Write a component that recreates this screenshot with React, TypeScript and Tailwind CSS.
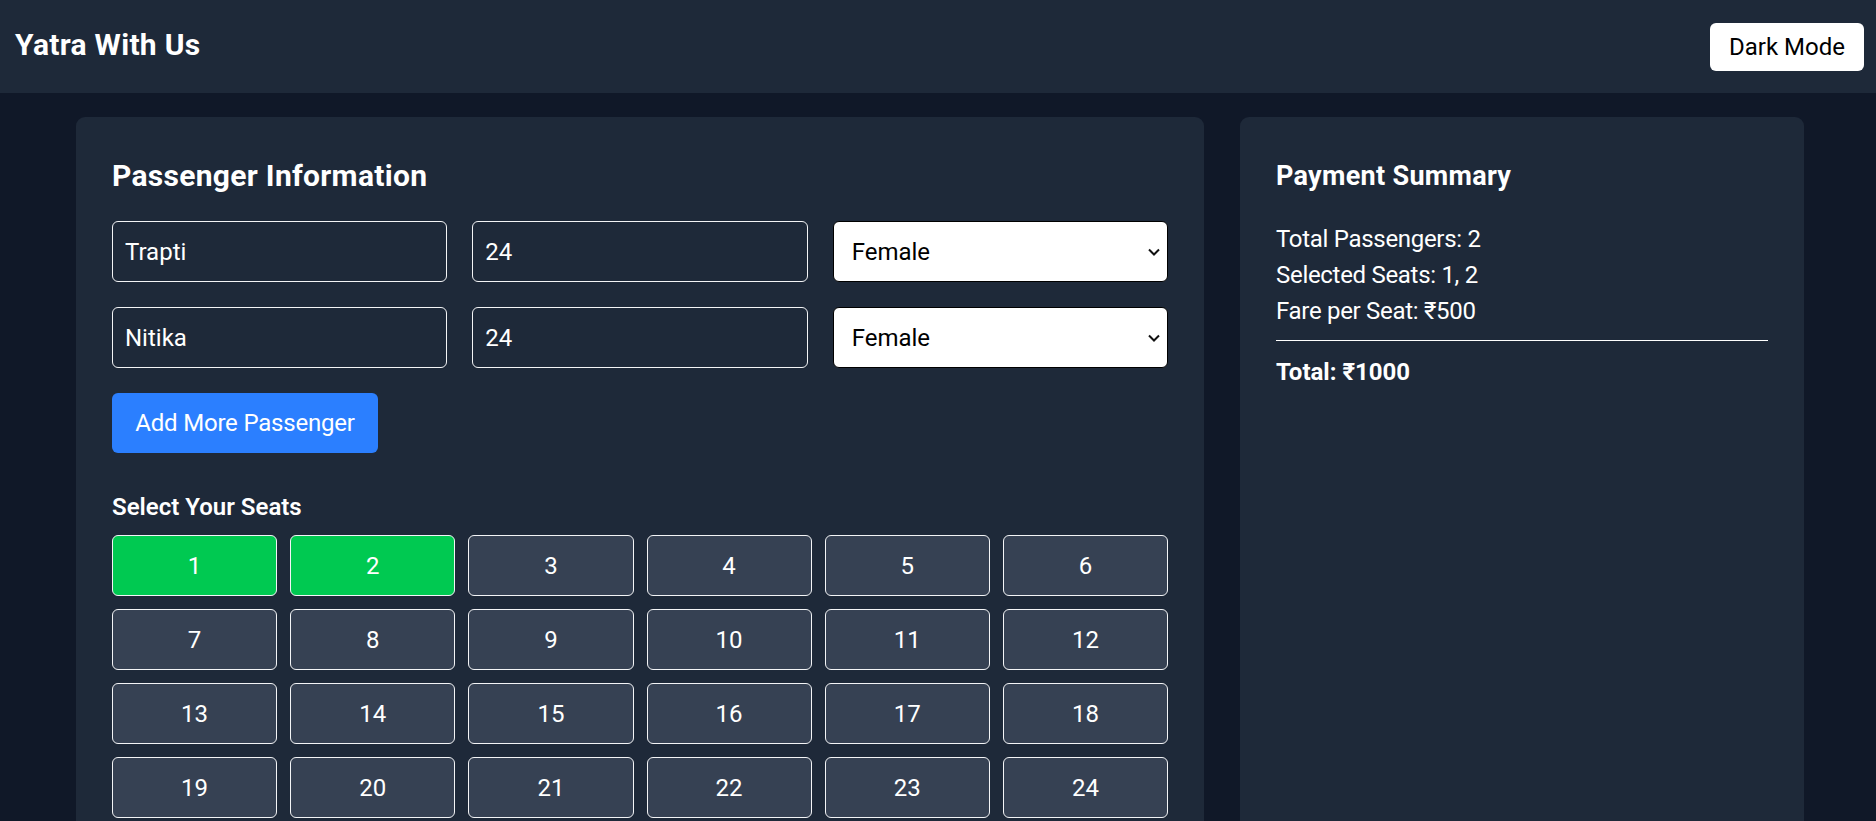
import { useState } from 'react'

const FONT = { fontFamily: 'Roboto, "Noto Sans", sans-serif' }

type Passenger = { name: string; age: string; gender: string }

const initialPassengers: Passenger[] = [
  { name: 'Trapti', age: '24', gender: 'Female' },
  { name: 'Nitika', age: '24', gender: 'Female' },
]

const seats = Array.from({ length: 40 }, (_, i) => i + 1)
const FARE = 500

export default function App() {
  const [passengers, setPassengers] = useState(initialPassengers)
  const [selected, setSelected] = useState<number[]>([1, 2])

  const toggleSeat = (n: number) =>
    setSelected((s) => (s.includes(n) ? s.filter((x) => x !== n) : [...s, n]))

  return (
    <div className="min-h-screen bg-gray-900 text-white" style={FONT}>
      <header className="h-[93px] bg-gray-800 flex items-center justify-between pl-[15px] pr-[12px]">
        <h1 className="text-[30px] font-bold leading-[42px] tracking-[0.3px] -mt-[4px]">Yatra With Us</h1>
        <button className="h-[48px] w-[154px] rounded-[6px] bg-white text-black text-[24px] leading-[36px]">
          Dark Mode
        </button>
      </header>

      <main className="max-w-[1728px] mx-auto pt-[24px] grid grid-cols-[2fr_1fr] gap-[36px] translate-x-[2px]">
        <section className="bg-gray-800 rounded-[9px] p-[36px]">
          <h2 className="text-[30px] font-bold leading-[42px] tracking-[0.3px] pt-[2px] mb-[24px]">
            Passenger Information
          </h2>

          <div className="flex flex-col gap-[25px]">
            {passengers.map((p, i) => (
              <div key={i} className="grid grid-cols-3 gap-[25px]">
                <input
                  defaultValue={p.name}
                  className="h-[61px] rounded-[6px] border border-gray-100 bg-transparent px-[12px] text-[24px] text-white outline-none"
                />
                <input
                  defaultValue={p.age}
                  className="h-[61px] rounded-[6px] border border-gray-100 bg-transparent px-[12px] text-[24px] text-white outline-none"
                />
                <div className="relative">
                  <select
                    defaultValue={p.gender}
                    className="h-[61px] w-full appearance-none rounded-[6px] border border-black bg-white pl-[18px] text-[24px] text-black outline-none"
                  >
                    <option>Male</option>
                    <option>Female</option>
                    <option>Other</option>
                  </select>
                  <svg
                    className="pointer-events-none absolute right-[8px] top-[27px]"
                    width="12"
                    height="8"
                    viewBox="0 0 12 8"
                    fill="none"
                  >
                    <path d="M1 1.5l5 5 5-5" stroke="#111" strokeWidth="2" />
                  </svg>
                </div>
              </div>
            ))}
          </div>

          <button
            onClick={() => setPassengers((ps) => [...ps, { name: '', age: '', gender: 'Male' }])}
            className="mt-[25px] h-[60px] w-[266px] rounded-[6px] bg-blue-500 text-[24px] tracking-[-0.2px] text-white"
          >
            Add More Passenger
          </button>

          <h3 className="mt-[36px] mb-[10px] text-[24px] font-semibold leading-[36px]">Select Your Seats</h3>
          <div className="grid grid-cols-6 gap-[13px]">
            {seats.map((n) => (
              <button
                key={n}
                onClick={() => toggleSeat(n)}
                className={`h-[61px] rounded-[6px] border border-gray-100 text-[24px] text-white ${
                  selected.includes(n) ? 'bg-green-500' : 'bg-gray-700'
                }`}
              >
                {n}
              </button>
            ))}
          </div>
        </section>

        <aside className="bg-gray-800 rounded-[9px] p-[36px]">
          <h2 className="text-[27px] font-bold leading-[42px] tracking-[0.3px] pt-[2px] mb-[24px]">
            Payment Summary
          </h2>
          <div className="text-[24px] leading-[36px] tracking-[-0.3px]">
            <p>Total Passengers: {passengers.length}</p>
            <p>Selected Seats: {selected.join(', ')}</p>
            <p>Fare per Seat: ₹{FARE}</p>
          </div>
          <div className="h-px bg-white mt-[11px] mb-[13px]" />
          <p className="text-[24px] font-bold leading-[36px]">Total: ₹{FARE * selected.length}</p>
        </aside>
      </main>
    </div>
  )
}
